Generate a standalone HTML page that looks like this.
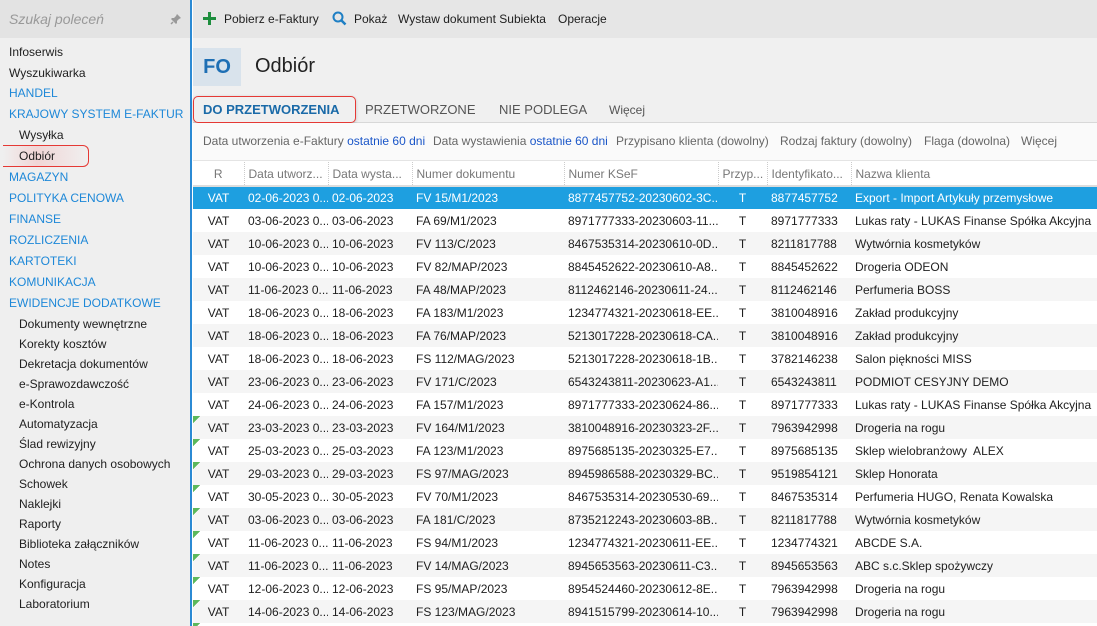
<!DOCTYPE html>
<html><head><meta charset="utf-8"><style>
*{margin:0;padding:0;box-sizing:border-box}
html,body{width:1097px;height:626px;overflow:hidden}
body{font-family:"Liberation Sans",sans-serif;font-size:12px;color:#1e1e1e;background:#fff;position:relative}
.abs{position:absolute;white-space:nowrap}
#side{position:absolute;left:0;top:0;width:192px;height:626px;background:#efefef;border-right:2px solid #2b8ad4}
#search{position:absolute;left:0;top:0;width:190px;height:38px;background:#e3e3e3}
.si{position:absolute;left:9px;font-size:12px;line-height:16px;white-space:nowrap}
.blue{color:#1e88d8}
.sub{left:19px}
#tb{position:absolute;left:193px;top:0;width:904px;height:38px;background:#e6e6e6}
#hd{position:absolute;left:193px;top:38px;width:904px;height:57px;background:#f0f0f0}
#tabs{position:absolute;left:193px;top:95px;width:904px;height:28px;background:#f0f0f0;border-bottom:1px solid #d8d8d8}
#flt{position:absolute;left:193px;top:123px;width:904px;height:38px;background:#fafafa;border-bottom:1px solid #e4e4e4}
#tw{position:absolute;left:193px;top:162px;width:904px;height:464px;overflow:hidden}
table{border-collapse:collapse;table-layout:fixed;width:904px}
td,th{height:23px;white-space:nowrap;overflow:hidden;font-weight:normal;text-align:left;padding-left:4px;font-size:12px}
th{color:#777;border-bottom:2px solid #ddd;border-left:1px dotted #ccc;height:24px}
tr:nth-child(even) td{background:#f5f5f5}
tr.sel td{background:#1e9fe0!important;color:#fff}
td.c{text-align:center;padding-left:0}
td.g{background-image:linear-gradient(135deg,#5cb85c 0,#5cb85c 5px,transparent 5px)!important;background-repeat:no-repeat}
tr:nth-child(even) td.g{background:linear-gradient(135deg,#5cb85c 0,#5cb85c 5px,#f5f5f5 5px)!important}
</style></head><body>
<div id="side">
<div id="search"><span class="abs" style="left:9px;top:11px;font-style:italic;color:#999;font-size:14px">Szukaj poleceń</span>
<svg class="abs" style="left:170px;top:13px" width="12" height="12" viewBox="0 0 12 12"><path d="M7 1l4 4-2 1-2 2 0 2-1 1-5-5 1-1 2 0 2-2z" fill="#999"/><path d="M3 9l-2 2" stroke="#999" stroke-width="1.5"/></svg></div>
<div class="si" style="top:44px">Infoserwis</div>
<div class="si" style="top:65px">Wyszukiwarka</div>
<div class="si blue" style="top:85px">HANDEL</div>
<div class="si blue" style="top:106px">KRAJOWY SYSTEM E-FAKTUR</div>
<div class="si sub" style="top:127px">Wysyłka</div>
<div style="position:absolute;left:3px;top:145px;width:86px;height:22px;border:1.5px solid #e53935;border-left:none;border-radius:0 6px 6px 0;background:linear-gradient(90deg,#efefef,#f1d6d6 40%,#efefef)"></div>
<div class="si sub" style="top:148px">Odbiór</div>
<div class="si blue" style="top:169px">MAGAZYN</div>
<div class="si blue" style="top:190px">POLITYKA CENOWA</div>
<div class="si blue" style="top:211px">FINANSE</div>
<div class="si blue" style="top:232px">ROZLICZENIA</div>
<div class="si blue" style="top:253px">KARTOTEKI</div>
<div class="si blue" style="top:274px">KOMUNIKACJA</div>
<div class="si blue" style="top:295px">EWIDENCJE DODATKOWE</div>
<div class="si sub" style="top:316px">Dokumenty wewnętrzne</div>
<div class="si sub" style="top:336px">Korekty kosztów</div>
<div class="si sub" style="top:356px">Dekretacja dokumentów</div>
<div class="si sub" style="top:376px">e-Sprawozdawczość</div>
<div class="si sub" style="top:396px">e-Kontrola</div>
<div class="si sub" style="top:416px">Automatyzacja</div>
<div class="si sub" style="top:436px">Ślad rewizyjny</div>
<div class="si sub" style="top:456px">Ochrona danych osobowych</div>
<div class="si sub" style="top:476px">Schowek</div>
<div class="si sub" style="top:496px">Naklejki</div>
<div class="si sub" style="top:516px">Raporty</div>
<div class="si sub" style="top:536px">Biblioteka załączników</div>
<div class="si sub" style="top:556px">Notes</div>
<div class="si sub" style="top:576px">Konfiguracja</div>
<div class="si sub" style="top:596px">Laboratorium</div>
</div>
<div id="tb">
<svg class="abs" style="left:10px;top:12px" width="13" height="13" viewBox="0 0 13 13"><path d="M6.5 0v13M0 6.5h13" stroke="#1e8e3e" stroke-width="3"/></svg>
<span class="abs" style="left:31px;top:12px">Pobierz e-Faktury</span>
<svg class="abs" style="left:139px;top:11px" width="15" height="15" viewBox="0 0 15 15"><circle cx="6" cy="6" r="4.5" fill="none" stroke="#1e7fc4" stroke-width="2"/><line x1="9.5" y1="9.5" x2="13.5" y2="13.5" stroke="#1e7fc4" stroke-width="2.5"/></svg>
<span class="abs" style="left:161px;top:12px">Pokaż</span>
<span class="abs" style="left:205px;top:12px">Wystaw dokument Subiekta</span>
<span class="abs" style="left:365px;top:12px">Operacje</span>
</div>
<div id="hd">
<div class="abs" style="left:0;top:10px;width:48px;height:38px;background:#d9e3ec;color:#1e6fb4;font-size:20px;font-weight:bold;text-align:center;line-height:38px">FO</div>
<span class="abs" style="left:62px;top:17px;font-size:20px;color:#222">Odbiór</span>
</div>
<div id="tabs">
<div class="abs" style="left:0;top:1px;width:163px;height:27px;border:1.5px solid #e53935;border-radius:5px;box-shadow:0 1px 3px rgba(0,0,0,.2)"></div>
<span class="abs" style="left:10px;top:7px;font-weight:bold;color:#1a6aa8;font-size:13px">DO PRZETWORZENIA</span>
<span class="abs" style="left:172px;top:7px;color:#555;font-size:13px">PRZETWORZONE</span>
<span class="abs" style="left:306px;top:7px;color:#555;font-size:13px">NIE PODLEGA</span>
<span class="abs" style="left:416px;top:8px;color:#555">Więcej</span>
</div>
<div id="flt">
<span class="abs" style="left:10px;top:11px;color:#666">Data utworzenia e-Faktury <span style="color:#1a56c8">ostatnie 60 dni</span></span>
<span class="abs" style="left:240px;top:11px;color:#666">Data wystawienia <span style="color:#1a56c8">ostatnie 60 dni</span></span>
<span class="abs" style="left:423px;top:11px;color:#666">Przypisano klienta (dowolny)</span>
<span class="abs" style="left:587px;top:11px;color:#666">Rodzaj faktury (dowolny)</span>
<span class="abs" style="left:731px;top:11px;color:#666">Flaga (dowolna)</span>
<span class="abs" style="left:828px;top:11px;color:#666">Więcej</span>
</div>
<div id="tw"><table>
<colgroup><col style="width:51px"><col style="width:84px"><col style="width:84px"><col style="width:152px"><col style="width:154px"><col style="width:49px"><col style="width:84px"><col style="width:246px"></colgroup>
<tr><th style="text-align:center;padding:0;border-left:none">R</th><th>Data utworz...</th><th>Data wysta...</th><th>Numer dokumentu</th><th>Numer KSeF</th><th>Przyp...</th><th>Identyfikato...</th><th>Nazwa klienta</th></tr>
<tr class="sel"><td class="c">VAT</td><td>02-06-2023 0...</td><td>02-06-2023</td><td>FV 15/M1/2023</td><td>8877457752-20230602-3C...</td><td class="c">T</td><td>8877457752</td><td>Export - Import Artykuły przemysłowe</td></tr>
<tr><td class="c">VAT</td><td>03-06-2023 0...</td><td>03-06-2023</td><td>FA 69/M1/2023</td><td>8971777333-20230603-11...</td><td class="c">T</td><td>8971777333</td><td>Lukas raty - LUKAS Finanse Spółka Akcyjna</td></tr>
<tr><td class="c">VAT</td><td>10-06-2023 0...</td><td>10-06-2023</td><td>FV 113/C/2023</td><td>8467535314-20230610-0D...</td><td class="c">T</td><td>8211817788</td><td>Wytwórnia kosmetyków</td></tr>
<tr><td class="c">VAT</td><td>10-06-2023 0...</td><td>10-06-2023</td><td>FV 82/MAP/2023</td><td>8845452622-20230610-A8...</td><td class="c">T</td><td>8845452622</td><td>Drogeria ODEON</td></tr>
<tr><td class="c">VAT</td><td>11-06-2023 0...</td><td>11-06-2023</td><td>FA 48/MAP/2023</td><td>8112462146-20230611-24...</td><td class="c">T</td><td>8112462146</td><td>Perfumeria BOSS</td></tr>
<tr><td class="c">VAT</td><td>18-06-2023 0...</td><td>18-06-2023</td><td>FA 183/M1/2023</td><td>1234774321-20230618-EE...</td><td class="c">T</td><td>3810048916</td><td>Zakład produkcyjny</td></tr>
<tr><td class="c">VAT</td><td>18-06-2023 0...</td><td>18-06-2023</td><td>FA 76/MAP/2023</td><td>5213017228-20230618-CA...</td><td class="c">T</td><td>3810048916</td><td>Zakład produkcyjny</td></tr>
<tr><td class="c">VAT</td><td>18-06-2023 0...</td><td>18-06-2023</td><td>FS 112/MAG/2023</td><td>5213017228-20230618-1B...</td><td class="c">T</td><td>3782146238</td><td>Salon piękności MISS</td></tr>
<tr><td class="c">VAT</td><td>23-06-2023 0...</td><td>23-06-2023</td><td>FV 171/C/2023</td><td>6543243811-20230623-A1...</td><td class="c">T</td><td>6543243811</td><td>PODMIOT CESYJNY DEMO</td></tr>
<tr><td class="c">VAT</td><td>24-06-2023 0...</td><td>24-06-2023</td><td>FA 157/M1/2023</td><td>8971777333-20230624-86...</td><td class="c">T</td><td>8971777333</td><td>Lukas raty - LUKAS Finanse Spółka Akcyjna</td></tr>
<tr><td class="c g">VAT</td><td>23-03-2023 0...</td><td>23-03-2023</td><td>FV 164/M1/2023</td><td>3810048916-20230323-2F...</td><td class="c">T</td><td>7963942998</td><td>Drogeria na rogu</td></tr>
<tr><td class="c g">VAT</td><td>25-03-2023 0...</td><td>25-03-2023</td><td>FA 123/M1/2023</td><td>8975685135-20230325-E7...</td><td class="c">T</td><td>8975685135</td><td>Sklep wielobranżowy&nbsp; ALEX</td></tr>
<tr><td class="c g">VAT</td><td>29-03-2023 0...</td><td>29-03-2023</td><td>FS 97/MAG/2023</td><td>8945986588-20230329-BC...</td><td class="c">T</td><td>9519854121</td><td>Sklep Honorata</td></tr>
<tr><td class="c g">VAT</td><td>30-05-2023 0...</td><td>30-05-2023</td><td>FV 70/M1/2023</td><td>8467535314-20230530-69...</td><td class="c">T</td><td>8467535314</td><td>Perfumeria HUGO, Renata Kowalska</td></tr>
<tr><td class="c g">VAT</td><td>03-06-2023 0...</td><td>03-06-2023</td><td>FA 181/C/2023</td><td>8735212243-20230603-8B...</td><td class="c">T</td><td>8211817788</td><td>Wytwórnia kosmetyków</td></tr>
<tr><td class="c g">VAT</td><td>11-06-2023 0...</td><td>11-06-2023</td><td>FS 94/M1/2023</td><td>1234774321-20230611-EE...</td><td class="c">T</td><td>1234774321</td><td>ABCDE S.A.</td></tr>
<tr><td class="c g">VAT</td><td>11-06-2023 0...</td><td>11-06-2023</td><td>FV 14/MAG/2023</td><td>8945653563-20230611-C3...</td><td class="c">T</td><td>8945653563</td><td>ABC s.c.Sklep spożywczy</td></tr>
<tr><td class="c g">VAT</td><td>12-06-2023 0...</td><td>12-06-2023</td><td>FS 95/MAP/2023</td><td>8954524460-20230612-8E...</td><td class="c">T</td><td>7963942998</td><td>Drogeria na rogu</td></tr>
<tr><td class="c g">VAT</td><td>14-06-2023 0...</td><td>14-06-2023</td><td>FS 123/MAG/2023</td><td>8941515799-20230614-10...</td><td class="c">T</td><td>7963942998</td><td>Drogeria na rogu</td></tr>
<tr><td class="c g">VAT</td><td>15-06-2023 0...</td><td>15-06-2023</td><td>FV 16/M1/2023</td><td>8941515799-20230615-11...</td><td class="c">T</td><td>7963942998</td><td>Drogeria na rogu</td></tr>
</table></div>
</body></html>
